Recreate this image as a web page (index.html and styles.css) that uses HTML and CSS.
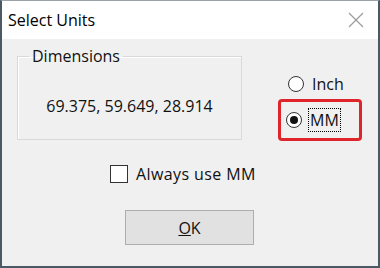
FILE: index.html
```html
<!DOCTYPE html>
<html lang="en">
<head>
    <meta charset="UTF-8">
    <title>Select Units</title>
    <link rel="stylesheet" href="styles.css">
</head>
<body>
    <div class="window">
        <div class="titlebar">
            <span class="title">Select Units</span>
            <svg class="close" width="16" height="16" viewBox="0 0 16 16">
                <path d="M1 1 L15 15 M15 1 L1 15" stroke="#9a9a9a" stroke-width="1.2" fill="none"/>
            </svg>
        </div>
        <div class="client">
            <div class="top-row">
                <fieldset class="group">
                    <legend>Dimensions</legend>
                    <div class="dims">69.375, 59.649, 28.914</div>
                </fieldset>
                <div class="units">
                    <label class="radio"><span class="dot"></span>Inch</label>
                    <div class="highlight">
                        <label class="radio checked"><span class="dot"></span><span class="focus">MM</span></label>
                    </div>
                </div>
            </div>
            <label class="check"><span class="box"></span>Always use MM</label>
            <div class="actions">
                <button class="ok"><u>O</u>K</button>
            </div>
        </div>
    </div>
</body>
</html>
```

FILE: styles.css
```css
body {
    margin: 0;
    font-family: 'Open Sans', 'Noto Sans', sans-serif;
    font-size: 16px;
    color: #111;
}

.window {
    width: 380px;
    height: 268px;
    box-sizing: border-box;
    border: 2px solid #4b5965;
    border-top: 1px solid #9aa3aa;
    display: flex;
    flex-direction: column;
    background-color: #f0f0f0;
}

.titlebar {
    height: 38px;
    background-color: #fff;
    display: flex;
    align-items: center;
    justify-content: space-between;
    padding: 0 14px 0 6px;
    flex-shrink: 0;
}

.title {
    font-size: 16px;
    color: #000;
}

.client {
    flex: 1;
    padding: 6px 0 0 15px;
}

.top-row {
    display: flex;
}

.group {
    width: 225px;
    height: 95px;
    box-sizing: border-box;
    margin: 0;
    padding: 0;
    border: 1px solid #d9d9d9;
    box-shadow: inset 1px 1px 0 #fff;
}

.group legend {
    margin-left: 11px;
    padding: 0 3px;
    line-height: 22px;
}

.dims {
    text-align: center;
    margin-top: 28px;
}

.units {
    margin-left: 36px;
    padding-top: 28px;
    display: flex;
    flex-direction: column;
}

.radio {
    display: flex;
    align-items: center;
    line-height: 22px;
}

.dot {
    width: 14px;
    height: 14px;
    border: 1px solid #333;
    border-radius: 50%;
    background-color: #fff;
    margin-right: 8px;
    margin-left: 10px;
    position: relative;
}

.checked .dot::after {
    content: '';
    position: absolute;
    left: 3px;
    top: 3px;
    width: 8px;
    height: 8px;
    border-radius: 50%;
    background-color: #111;
}

.highlight {
    margin-top: 4px;
    border: 3px solid #e0242b;
    border-radius: 4px;
    padding: 7px 6px 7px 0;
    width: 72px;
}

.highlight .dot {
    margin-left: 5px;
    margin-right: 7px;
}

.focus {
    outline: 1px dotted #000;
    padding: 0 1px;
}

.check {
    display: flex;
    align-items: center;
    margin: 22px 0 0 93px;
    line-height: 22px;
    letter-spacing: 0.4px;
}

.box {
    width: 16px;
    height: 16px;
    border: 1px solid #333;
    background-color: #fff;
    margin-right: 8px;
}

.actions {
    margin: 25px 0 0 108px;
}

.ok {
    width: 129px;
    height: 35px;
    font-family: inherit;
    font-size: 16px;
    color: #111;
    background-color: #e1e1e1;
    border: 1px solid #adadad;
    padding: 0;
}
```
